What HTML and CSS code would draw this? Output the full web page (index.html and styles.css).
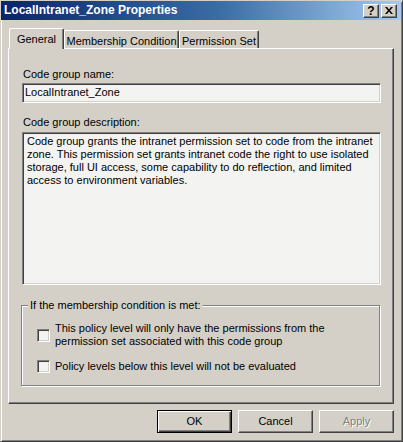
FILE: index.html
```html
<!DOCTYPE html>
<html>
<head>
<meta charset="utf-8">
<title>LocalIntranet_Zone Properties</title>
<link rel="stylesheet" href="styles.css">
</head>
<body>
<div class="window">
  <div class="titlebar">
    <span class="title">LocalIntranet_Zone Properties</span>
    <div class="caption-btns">
      <span class="cbtn help">?</span>
      <span class="cbtn close"><svg width="8" height="7" viewBox="0 0 8 7"><path d="M0 0h2l2 2.5L6 0h2L5 3.5 8 7H6L4 4.5 2 7H0l3-3.5z" fill="#000"/></svg></span>
    </div>
  </div>
  <div class="client">
    <div class="tabs">
      <div class="tab active t-general">General</div>
      <div class="tab t-member">Membership Condition</div>
      <div class="tab t-perm">Permission Set</div>
    </div>
    <div class="panel">
      <div class="lbl">Code group name:</div>
      <div class="edit single">LocalIntranet_Zone</div>
      <div class="lbl lbl2">Code group description:</div>
      <div class="edit multi">Code group grants the intranet permission set to code from the intranet<br>zone. This permission set grants intranet code the right to use isolated<br>storage, full UI access, some capability to do reflection, and limited<br>access to environment variables.</div>
      <fieldset class="group">
        <legend>If the membership condition is met:</legend>
        <div class="check"><span class="box"></span><span class="ctext">This policy level will only have the permissions from the<br>permission set associated with this code group</span></div>
        <div class="check second"><span class="box"></span><span class="ctext">Policy levels below this level will not be evaluated</span></div>
      </fieldset>
    </div>
    <div class="buttons">
      <button class="btn default">OK</button>
      <button class="btn">Cancel</button>
      <button class="btn disabled">Apply</button>
    </div>
  </div>
</div>
</body>
</html>
```
FILE: styles.css
```css
* { box-sizing: border-box; }
html, body { margin: 0; padding: 0; }
body {
  width: 403px;
  height: 442px;
  background: #D4D0C8;
  font-family: "Liberation Sans", Arial, sans-serif;
  font-size: 11px;
  color: #000;
  overflow: hidden;
}
.window {
  width: 403px;
  height: 442px;
  background: #D4D0C8;
  border-top: 1px solid #D4D0C8;
  border-left: 1px solid #D4D0C8;
  border-right: 1px solid #404040;
  border-bottom: 1px solid #404040;
  box-shadow: inset 1px 1px #fff, inset -1px -1px #808080;
  display: flex;
  flex-direction: column;
}
.titlebar {
  height: 19px;
  margin-right: 1px;
  background: linear-gradient(to right, #0A246A 0%, #3A6EA5 55%, #A6CAF0 100%);
  display: flex;
  align-items: center;
  justify-content: space-between;
  padding: 0 4px 0 3px;
}
.title {
  color: #fff;
  font-weight: bold;
  font-size: 12px;
  line-height: 19px;
  white-space: nowrap;
}
.caption-btns {
  display: flex;
  gap: 2px;
  margin-top: 1px;
}
.cbtn {
  width: 16px;
  height: 14px;
  background: #D4D0C8;
  border-top: 1px solid #fff;
  border-left: 1px solid #fff;
  border-right: 1px solid #404040;
  border-bottom: 1px solid #404040;
  box-shadow: inset -1px -1px #808080;
  display: flex;
  align-items: center;
  justify-content: center;
}
.help {
  font-weight: bold;
  font-size: 12px;
  line-height: 12px;
  padding-bottom: 1px;
}
.close svg { display: block; margin-top: -1px; }
.client {
  padding: 8px 0 0 7px;
  display: flex;
  flex-direction: column;
}
.tabs {
  display: flex;
  align-items: flex-end;
  height: 20px;
  margin-left: 1px;
  position: relative;
  z-index: 1;
}
.tab {
  height: 18px;
  background: #D4D0C8;
  border-top: 1px solid #fff;
  border-left: 1px solid #fff;
  border-right: 1px solid #404040;
  border-top-left-radius: 2px;
  border-top-right-radius: 2px;
  box-shadow: inset -1px 0 #808080;
  text-align: center;
  line-height: 13px;
  padding-top: 4px;
  white-space: nowrap;
}
.tab.active {
  height: 21px;
  margin-bottom: -1px;
  padding-top: 4px;
}
.t-general { width: 55px; }
.t-member { width: 115px; }
.t-perm { width: 80px; }
.panel {
  width: 386px;
  height: 356px;
  border-top: 1px solid #fff;
  border-left: 1px solid #fff;
  border-right: 1px solid #404040;
  border-bottom: 1px solid #404040;
  box-shadow: inset -1px -1px #808080;
  padding: 19px 0 0 12px;
}
.lbl {
  line-height: 13px;
  height: 13px;
  margin-left: 2px;
}
.lbl2 { margin-top: 13px; }
.edit {
  margin-left: 1px;
  width: 359px;
  background: #F3F3F1;
  border-top: 1px solid #808080;
  border-left: 1px solid #808080;
  border-right: 1px solid #fff;
  border-bottom: 1px solid #fff;
  box-shadow: inset 1px 1px #404040, inset -1px -1px #D4D0C8;
  line-height: 13px;
  white-space: nowrap;
}
.single {
  margin-top: 2px;
  height: 20px;
  padding: 2px 1px 2px 2px;
}
.multi {
  margin-top: 3px;
  height: 153px;
  padding: 2px 2px 2px 4px;
}
.group {
  margin: 14px 0 0 0;
  width: 359px;
  border: 1px solid #808080;
  box-shadow: 1px 1px 0 #fff, inset 1px 1px 0 #fff;
  padding: 10px 0 12px 6px;
  min-width: 0;
}
.group legend {
  background: #D4D0C8;
  padding: 0 2px;
  line-height: 13px;
}
.check {
  display: flex;
  align-items: center;
  margin-left: 9px;
  line-height: 13px;
}
.check.second { margin-top: 12px; }
.box {
  flex: none;
  width: 13px;
  height: 13px;
  background: #F3F3F1;
  border-top: 1px solid #808080;
  border-left: 1px solid #808080;
  border-right: 1px solid #fff;
  border-bottom: 1px solid #fff;
  box-shadow: inset 1px 1px #404040, inset -1px -1px #D4D0C8;
  margin-right: 5px;
}
.ctext { white-space: nowrap; }
.buttons {
  margin-top: 6px;
  width: 386px;
  display: flex;
  justify-content: flex-end;
  gap: 6px;
}
.btn {
  width: 75px;
  height: 23px;
  padding: 0;
  margin: 0;
  font-family: "Liberation Sans", Arial, sans-serif;
  font-size: 11px;
  color: #000;
  background: #D4D0C8;
  border-top: 1px solid #fff;
  border-left: 1px solid #fff;
  border-right: 1px solid #404040;
  border-bottom: 1px solid #404040;
  box-shadow: inset -1px -1px #808080;
  border-radius: 0;
  line-height: 13px;
}
.btn.default {
  border: 1px solid #000;
  box-shadow: inset 1px 1px #fff, inset -1px -1px #404040, inset -2px -2px #808080;
}
.btn.disabled {
  color: #808080;
  text-shadow: 1px 1px 0 #fff;
}
```
